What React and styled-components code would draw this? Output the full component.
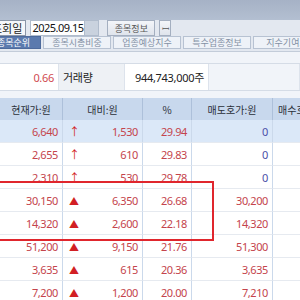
import React from 'react'
import styled, { createGlobalStyle } from 'styled-components'

const Global = createGlobalStyle`
  html, body { margin: 0; padding: 0; }
  body {
    width: 300px;
    height: 300px;
    overflow: hidden;
    background: #f1f4f9;
    font-family: "Noto Sans", "Noto Sans CJK KR", sans-serif;
  }
`

const Screen = styled.div`
  position: relative;
  width: 300px;
  height: 300px;
  overflow: hidden;
  background: #f1f4f9;
`

const TitleBar = styled.div`
  height: 20px;
  background: linear-gradient(#a6b2c6, #b3bfd1);
`

const Toolbar = styled.div`
  height: 16px;
  display: flex;
  align-items: center;
  gap: 4px;
  background: #e3e8f0;
  margin-left: -12px;
  font-size: 11px;
`

const FieldLabel = styled.div`
  height: 14px;
  padding: 0 3px;
  border: 1px solid #8a96a8;
  background: #f4f6fa;
  color: #222;
  font-family: "Noto Sans CJK KR", sans-serif;
  display: flex;
  align-items: center;
  font-size: 11px;
`

const DateBox = styled.div`
  display: flex;
  height: 14px;
  border: 1px solid #b0bccc;
  background: #fff;
`

const DateText = styled.div`
  width: 52px;
  padding-left: 1px;
  font-size: 11px;
  line-height: 14px;
  color: #111;
  letter-spacing: -0.5px;
  white-space: nowrap;
`

const Spin = styled.div`
  width: 13px;
  background: #c9d2de;
  border-left: 1px solid #b0bccc;
`

const ToolButton = styled.div`
  height: 14px;
  width: ${p => p.$w}px;
  margin-left: ${p => p.$gap || 0}px;
  border: 1px solid #a4afc0;
  background: linear-gradient(#f3f5f9, #dfe4ec);
  color: #555;
  font-family: "Noto Sans CJK KR", sans-serif;
  font-size: 9px;
  display: flex;
  align-items: center;
  justify-content: center;
`

const TabBar = styled.div`
  height: 14px;
  display: flex;
  gap: 2px;
  background: #e3e8f0;
  margin-left: -14px;
  padding-bottom: 1px;
  border-bottom: 1px solid #c3ccd9;
`

const Tab = styled.div`
  flex: 0 0 ${p => p.$w}px;
  height: 13px;
  border: 1px solid ${p => (p.$active ? '#4d6a9c' : '#b7c2d2')};
  background: ${p => (p.$active ? '#5b7aae' : '#eef2f8')};
  color: ${p => (p.$active ? '#fff' : '#8390a4')};
  font-family: "Noto Sans CJK KR", sans-serif;
  font-size: 9px;
  display: flex;
  align-items: center;
  justify-content: center;
  box-sizing: border-box;
`

const InfoRow = styled.div`
  margin-top: 11px;
  height: 26px;
  display: grid;
  grid-template-columns: 59px 66px 84px 1fr;
  border-top: 1px solid #d5dce6;
  border-bottom: 1px solid #d5dce6;
`

const InfoCell = styled.div`
  display: flex;
  align-items: center;
  justify-content: ${p => (p.$right ? 'flex-end' : 'flex-start')};
  padding: 0 4px;
  background: ${p => p.$bg};
  color: ${p => p.$color || '#222'};
  font-size: 11px;
  font-family: ${p => (p.$kr ? '"Noto Sans CJK KR", sans-serif' : '"Noto Sans", "Noto Sans CJK KR", sans-serif')};
  letter-spacing: -0.3px;
  border-right: 1px solid #dde3ec;
`

const Table = styled.div`
  margin-top: 7px;
  display: grid;
  grid-template-columns: 63px 80px 49px 81px 60px;
  grid-auto-rows: 23px;
  grid-template-rows: 22px;
  background: #fff;
`

const Head = styled.div`
  background: #c8d8ed;
  border-right: 1px solid #adc0da;
  display: flex;
  align-items: center;
  justify-content: center;
  color: #2a2f38;
  font-family: "Noto Sans CJK KR", sans-serif;
  font-size: 10px;
  white-space: nowrap;
  overflow: hidden;
`

const Cell = styled.div`
  background: ${p => (p.$sel ? '#dbe8f8' : '#fff')};
  border-right: 1px solid #cbd9eb;
  border-bottom: 1px solid #e6eaf0;
  display: flex;
  align-items: center;
  justify-content: space-between;
  padding: 0 4px;
  color: ${p => p.$color || '#c4444c'};
  font-size: 11px;
  letter-spacing: -0.4px;
  box-sizing: border-box;
`

const Mark = styled.span`
  color: #d21f24;
  font-size: ${p => (p.$tri ? '10px' : '11px')};
  margin-left: 2px;
`

const Highlight = styled.div`
  position: absolute;
  left: -4px;
  top: 181px;
  width: 214px;
  height: 56px;
  border: 2px solid #e0262d;
  pointer-events: none;
`

const rows = [
  ['6,640', '↑', '1,530', '29.94', '0'],
  ['2,655', '↑', '610', '29.83', '0'],
  ['2,310', '↑', '530', '29.78', '0'],
  ['30,150', '▲', '6,350', '26.68', '30,200'],
  ['14,320', '▲', '2,600', '22.18', '14,320'],
  ['51,200', '▲', '9,150', '21.76', '51,300'],
  ['3,635', '▲', '615', '20.36', '3,635'],
  ['7,200', '▲', '1,200', '20.00', '7,210'],
]

export default function App() {
  return (
    <Screen>
      <Global />
      <TitleBar />
      <Toolbar>
        <FieldLabel>조회일</FieldLabel>
        <DateBox>
          <DateText>2025.09.15</DateText>
          <Spin />
        </DateBox>
        <ToolButton $w={46} $gap={4}>종목정보</ToolButton>
        <ToolButton $w={10}>ꟷ</ToolButton>
      </Toolbar>
      <TabBar>
        <Tab $w={55} $active>종목순위</Tab>
        <Tab $w={68}>종목시총비중</Tab>
        <Tab $w={68}>업종예상지수</Tab>
        <Tab $w={68}>특수업종정보</Tab>
        <Tab $w={68}>지수기여도</Tab>
      </TabBar>
      <InfoRow>
        <InfoCell $bg="#fff" $right $color="#d04a50">0.66</InfoCell>
        <InfoCell $bg="#eef1f5" $kr>거래량</InfoCell>
        <InfoCell $bg="#fff" $right>944,743,000주</InfoCell>
        <InfoCell $bg="#f1f4f9" />
      </InfoRow>
      <Table>
        <Head>현재가:원</Head>
        <Head>대비:원</Head>
        <Head>%</Head>
        <Head>매도호가:원</Head>
        <Head>매수호가:원</Head>
        {rows.map((r, i) => (
          <React.Fragment key={i}>
            <Cell $sel={i === 0}><span />{r[0]}</Cell>
            <Cell $sel={i === 0}>
              <Mark $tri={r[1] === '▲'}>{r[1]}</Mark>
              {r[2]}
            </Cell>
            <Cell $sel={i === 0}><span />{r[3]}</Cell>
            <Cell $sel={i === 0} $color={r[4] === '0' ? '#4b4fa8' : undefined}><span />{r[4]}</Cell>
            <Cell $sel={i === 0} />
          </React.Fragment>
        ))}
      </Table>
      <Highlight />
    </Screen>
  )
}
